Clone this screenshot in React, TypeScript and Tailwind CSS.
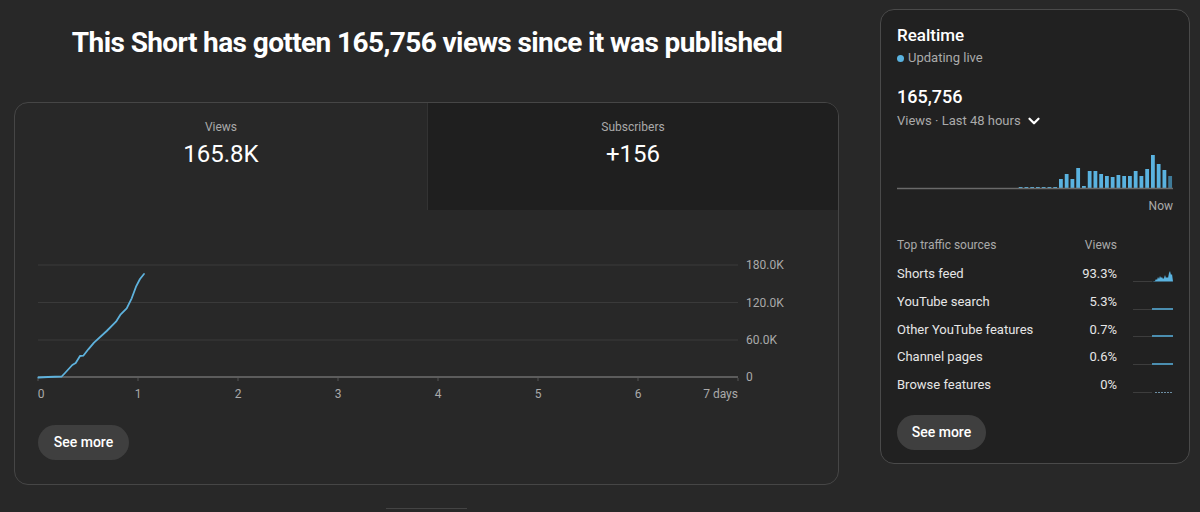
import React from "react";
import { ChevronDown } from "lucide-react";

const linePts: [number, number][] = [
  [38.3, 377.5], [48, 377], [61.7, 376.5], [65, 373], [72.3, 365], [75.7, 363],
  [80, 356], [83.3, 355.7], [88.3, 349.3], [94, 342.7], [106.7, 331], [116, 321.7],
  [120.7, 314.3], [126.7, 308.3], [131.7, 298.3], [136, 286.7], [140, 279], [144, 274],
];

// heights of the 48 hourly bars, oldest first
const bars: number[] = [
  0, 0, 0, 0, 0, 0, 0, 0, 0, 0, 0, 0, 0, 0, 0, 0, 0, 0, 0, 0, 0,
  1, 1, 1, 1, 1, 1, 1,
  9, 14, 9, 20, 2, 17, 17, 14, 12, 11, 13, 12, 12, 17, 12, 19, 33, 24, 18, 12,
];

const sources = [
  { name: "Shorts feed", pct: "93.3%", kind: "area" },
  { name: "YouTube search", pct: "5.3%", kind: "flat" },
  { name: "Other YouTube features", pct: "0.7%", kind: "flat" },
  { name: "Channel pages", pct: "0.6%", kind: "flat" },
  { name: "Browse features", pct: "0%", kind: "dots" },
];

const Spark: React.FC<{ kind: string }> = ({ kind }) => (
  <svg width="40" height="14" viewBox="0 0 40 14" className="block">
    <line x1="0" y1="12.5" x2="19" y2="12.5" stroke="#3d3d3d" strokeWidth="1" />
    {kind === "area" && (
      <path
        d="M19 12.5 L22 12 L23 10 L24 11 L25 8 L26 10 L27 7 L28 9 L29 8 L30 10 L31 9 L32 6 L33 9 L34 8 L35 9 L36 4 L37 2 L38 6 L39 5 L40 12.5 Z"
        fill="#5ab3e0"
      />
    )}
    {kind === "flat" && <line x1="19" y1="12" x2="40" y2="12" stroke="#5ab3e0" strokeWidth="1.5" />}
    {kind === "dots" && (
      <line x1="22" y1="12.5" x2="40" y2="12.5" stroke="#6d8ea3" strokeWidth="1" strokeDasharray="2 1" />
    )}
  </svg>
);

const ViewsChart: React.FC = () => {
  // svg origin is at page (15, 210)
  const ox = 15;
  const oy = 210;
  const grid = [265, 302.5, 340, 377];
  const yLabels = ["180.0K", "120.0K", "60.0K", "0"];
  const d = linePts.map((p, i) => `${i ? "L" : "M"}${p[0] - ox} ${p[1] - oy}`).join(" ");
  return (
    <svg width="823" height="200" viewBox="0 0 823 200" className="block">
      {grid.slice(0, 3).map((g) => (
        <line key={g} x1={38 - ox} y1={g - oy} x2={738 - ox} y2={g - oy} stroke="#3a3a3a" strokeWidth="1" />
      ))}
      <line x1={38 - ox} y1={377 - oy} x2={738 - ox} y2={377 - oy} stroke="#6e6e6e" strokeWidth="1.5" />
      {[0, 1, 2, 3, 4, 5, 6, 7].map((n) => (
        <line key={n} x1={38 + n * 100 - ox} y1={378 - oy} x2={38 + n * 100 - ox} y2={381 - oy} stroke="#555" strokeWidth="1" />
      ))}
      {grid.map((g, i) => (
        <text key={g} x={746 - ox} y={g - oy + 4} fontSize="12" fill="#aaaaaa" fontFamily="Roboto, sans-serif">
          {yLabels[i]}
        </text>
      ))}
      {["0", "1", "2", "3", "4", "5", "6"].map((t, i) => (
        <text
          key={t}
          x={(i === 0 ? 41 : 38 + i * 100) - ox}
          y={398 - oy}
          fontSize="12"
          fill="#aaaaaa"
          textAnchor="middle"
          fontFamily="Roboto, sans-serif"
        >
          {t}
        </text>
      ))}
      <text x={738 - ox} y={398 - oy} fontSize="12" fill="#aaaaaa" textAnchor="end" fontFamily="Roboto, sans-serif">
        7 days
      </text>
      <path d={d} fill="none" stroke="#5eb2dd" strokeWidth="1.8" strokeLinejoin="round" strokeLinecap="round" />
    </svg>
  );
};

const RealtimeBars: React.FC = () => (
  <svg width="276" height="44" viewBox="0 0 276 44" className="block">
    {bars.map((h, i) =>
      h > 0 ? (
        <rect
          key={i}
          x={i * 5.75 + 1}
          y={42 - h}
          width="3.8"
          height={h}
          fill={i === 47 ? "#3f7b99" : "#5ab3e0"}
        />
      ) : null
    )}
    <line x1="0" y1="42.5" x2="276" y2="42.5" stroke="#6a6a6a" strokeWidth="1.5" />
  </svg>
);

const App: React.FC = () => {
  return (
    <div className="w-[1200px] h-[512px] overflow-hidden bg-[#282828] text-white flex font-['Roboto',sans-serif]">
      <div className="w-[840px] pl-[14px] flex flex-col">
        <div className="pt-[27px] h-[102px] flex justify-center">
          <h1 className="text-[28px] leading-[32px] font-bold tracking-[-0.6px]">
            This Short has gotten 165,756 views since it was published
          </h1>
        </div>
        <div className="w-[825px] h-[383px] rounded-[14px] border border-[#464646] overflow-hidden flex flex-col">
          <div className="flex h-[107px]">
            <div className="w-[412px] flex flex-col items-center pt-[16px]">
              <div className="text-[12px] leading-[16px] text-[#aaaaaa]">Views</div>
              <div className="text-[24px] leading-[30px] mt-[4px]">165.8K</div>
            </div>
            <div className="flex-1 bg-[#1f1f1f] border-l border-[#333] flex flex-col items-center pt-[16px]">
              <div className="text-[12px] leading-[16px] text-[#aaaaaa]">Subscribers</div>
              <div className="text-[24px] leading-[30px] mt-[4px]">+156</div>
            </div>
          </div>
          <ViewsChart />
          <div className="pl-[23px] mt-[15px]">
            <button className="w-[91px] h-[35px] rounded-full bg-[#3f3f3f] text-[14px] font-medium text-white">
              See more
            </button>
          </div>
        </div>
        <div className="ml-[372px] mt-[23px] w-[81px] h-px bg-[#444]" />
      </div>
      <div className="ml-[40px] mt-[9px] w-[310px] h-[455px] rounded-[14px] border border-[#4a4a4a] bg-[#212121] px-[16px] pt-[14px] flex flex-col">
        <div className="text-[17px] leading-[22px] font-medium">Realtime</div>
        <div className="flex items-center gap-[4px] text-[13px] leading-[18px] text-[#aaaaaa] mt-[3px]">
          <span className="w-[7px] h-[7px] rounded-full bg-[#5ab3e0]" />
          Updating live
        </div>
        <div className="text-[18px] leading-[24px] font-medium mt-[18px]">165,756</div>
        <div className="flex items-center gap-[4px] text-[13px] leading-[18px] text-[#aaaaaa] mt-[3px]">
          Views · Last 48 hours
          <ChevronDown className="w-[18px] h-[18px] text-white" strokeWidth={3} />
        </div>
        <div className="mt-[16px]">
          <RealtimeBars />
        </div>
        <div className="text-right text-[12px] leading-[16px] text-[#aaaaaa] mt-[8px]">Now</div>
        <div className="flex text-[12px] leading-[16px] text-[#aaaaaa] mt-[23px]">
          <span className="flex-1">Top traffic sources</span>
          <span className="w-[60px] text-right">Views</span>
          <span className="w-[56px]" />
        </div>
        <div className="flex flex-col mt-[7px]">
          {sources.map((s) => (
            <div key={s.name} className="flex items-center h-[27.75px] text-[13px] text-[#e6e6e6]">
              <span className="flex-1">{s.name}</span>
              <span className="w-[60px] text-right">{s.pct}</span>
              <span className="w-[56px] flex justify-end pt-[4px]">
                <Spark kind={s.kind} />
              </span>
            </div>
          ))}
        </div>
        <div className="mt-[16px]">
          <button className="w-[89px] h-[35px] rounded-full bg-[#3f3f3f] text-[14px] font-medium text-white">
            See more
          </button>
        </div>
      </div>
    </div>
  );
};

export default App;
